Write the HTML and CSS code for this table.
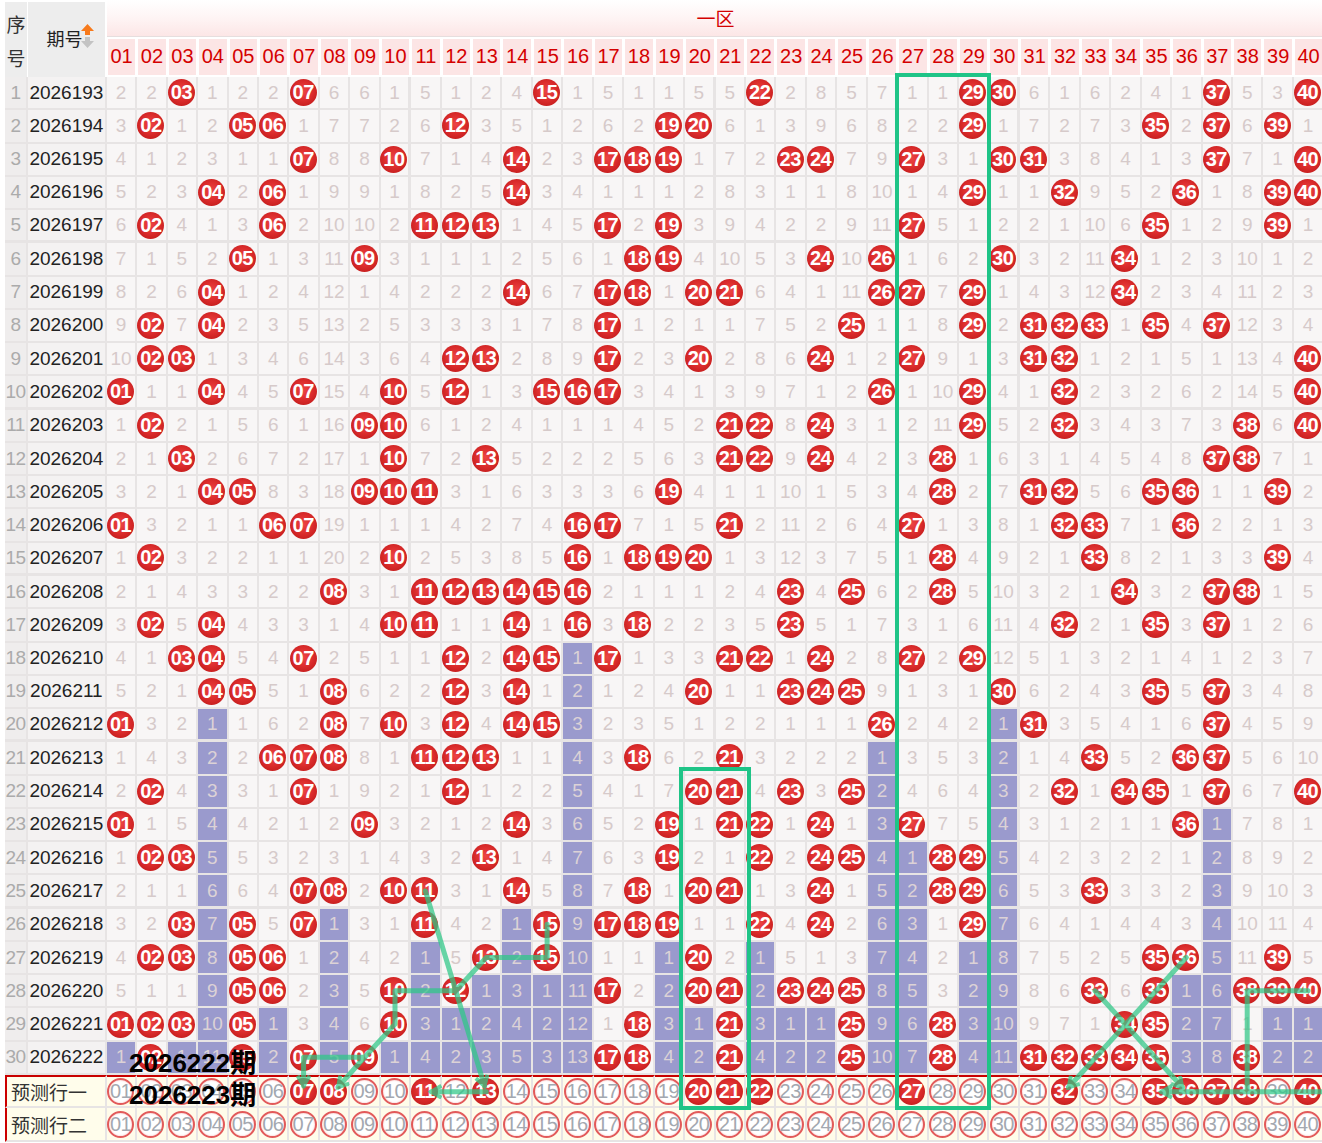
FILE: index.html
```html
<!DOCTYPE html>
<html lang="zh-CN">
<head>
<meta charset="utf-8">
<title>一区走势图</title>
<link rel="stylesheet" href="styles.css">
</head>
<body>
<div class="wrap" id="wrap">
  <div class="board" id="board">
    <div class="h-seq">序号</div>
    <div class="h-qh"><span class="h-qh-text">期号</span><svg class="sort" width="13" height="25" viewBox="0 0 13 25"><path d="M6.5 0 L13 7 L9 7 L9 11 L4 11 L4 7 L0 7 Z" fill="#f77a1c"/><path d="M4 13 L9 13 L9 17 L13 17 L6.5 24 L0 17 L4 17 Z" fill="#c3c3c3"/></svg></div>
    <div class="h-zone">一区</div>
  </div>
  <svg class="overlay" id="overlay" width="1322" height="1143" viewBox="0 0 1322 1143">
    <defs>
      <marker id="ah" markerUnits="userSpaceOnUse" markerWidth="16" markerHeight="16" refX="11" refY="7" orient="auto">
        <path d="M1,1 L11,7 L1,13" fill="none" stroke="#2ec887" stroke-width="4" stroke-linejoin="miter"/>
      </marker>
    </defs>
    <g id="lines" class="lines"></g>
    <rect class="frame" x="897" y="75" width="92" height="1033"/>
    <rect class="frame" x="681" y="769" width="68" height="339"/>
  </svg>
  <div class="tag tag1">2026222期</div>
  <div class="tag tag2">2026223期</div>
</div>
<script src="script.js"></script>
</body>
</html>
```

FILE: styles.css
```css
html, body {
  margin: 0;
  padding: 0;
  background: #ffffff;
}

.wrap {
  position: relative;
  width: 1322px;
  height: 1143px;
  overflow: hidden;
  padding-left: 5px;
  box-sizing: border-box;
  font-family: "Liberation Sans", Arial, "Noto Sans CJK SC", sans-serif;
}

.board {
  display: grid;
  grid-template-columns: 23px 78.8px repeat(40, 30.44px);
  grid-template-rows: 36.5px 40.5px repeat(30, 33.28px) 33.5px 33.5px;
}

.h-seq {
  grid-row: 1 / 3;
  box-sizing: border-box;
  background: #ededed;
  border-right: 1px solid #ffffff;
  border-top: 2px solid #ffffff;
  color: #333333;
  font-family: "Noto Sans CJK SC", sans-serif;
  font-size: 19px;
  line-height: 34px;
  padding-top: 5px;
  text-align: center;
  word-break: break-all;
}

.h-qh {
  grid-row: 1 / 3;
  box-sizing: border-box;
  background: #ededed;
  border-right: 2px solid #ffffff;
  border-top: 2px solid #ffffff;
  display: flex;
  align-items: center;
  justify-content: center;
  padding-left: 8px;
  padding-bottom: 4px;
}

.h-qh-text {
  color: #222222;
  font-family: "Noto Sans CJK SC", sans-serif;
  font-size: 18px;
}

.sort {
  display: block;
  margin-left: -1px;
  margin-top: -2px;
}

.h-zone {
  grid-column: 3 / span 40;
  box-sizing: border-box;
  background: linear-gradient(to bottom, #ffffff 0%, #fef3f3 55%, #fce6e6 100%);
  border-bottom: 1px solid #e6dede;
  color: #d40000;
  font-family: "Noto Sans CJK SC", sans-serif;
  font-size: 19px;
  display: flex;
  align-items: center;
  justify-content: center;
  padding-bottom: 1px;
}

.h-num {
  box-sizing: border-box;
  background: #fce5e5;
  border-left: 1px solid #ffffff;
  border-right: 2px solid #ffffff;
  border-top: 2px solid #ffffff;
  border-bottom: 2px solid #ffffff;
  color: #d40000;
  font-size: 20px;
  display: flex;
  align-items: center;
  justify-content: center;
}

.seq,
.qh,
.c,
.plabel,
.pc {
  box-sizing: border-box;
  border-right: 2px solid #e7e4e4;
  border-bottom: 2px solid #e7e4e4;
  display: flex;
  align-items: center;
  justify-content: center;
  overflow: visible;
  white-space: nowrap;
}

.seq {
  background: #efeded;
  color: #ababab;
  font-size: 19px;
  letter-spacing: -0.5px;
}

.qh {
  background: #f4f2f2;
  color: #222222;
  font-size: 19px;
}

.c {
  background: #f8f6f6;
  color: #d6caca;
  font-size: 19px;
}

.c.s10 {
  border-right-width: 3px;
}

.r5 {
  border-bottom-width: 3px;
}

.c.p {
  background: #9a9acd;
  color: #dcd2d6;
}

.ball {
  flex: none;
  width: 27px;
  height: 27px;
  border-radius: 50%;
  background: radial-gradient(circle at 50% 45%, #ec4545 0%, #dc2d2d 45%, #c81f1f 75%, #b51a1a 90%, rgba(181, 26, 26, 0.55) 100%);
  color: #ffffff;
  font-weight: bold;
  font-size: 20px;
  letter-spacing: -0.5px;
  display: flex;
  align-items: center;
  justify-content: center;
  margin-left: -1px;
}

.oball {
  flex: none;
  box-sizing: border-box;
  width: 27px;
  height: 27px;
  border-radius: 50%;
  border: 2px solid #e25a5a;
  box-shadow: inset 0 0 2px #f2b1b1;
  background: #ffffff;
  color: #a3a8b0;
  font-size: 20px;
  letter-spacing: -0.6px;
  display: flex;
  align-items: center;
  justify-content: center;
  margin-left: -1px;
}

.plabel {
  grid-column: span 2;
  background: #fffdeb;
  border-left: 2px solid #cc0000;
  justify-content: flex-start;
  padding-left: 4px;
  color: #333333;
  font-family: "Noto Sans CJK SC", sans-serif;
  font-size: 19px;
}

.pc {
  background: #fffcea;
}

.top-red {
  border-top: 2px solid #c80000;
}

.overlay {
  position: absolute;
  left: 0;
  top: 0;
  pointer-events: none;
}

.lines {
  opacity: 0.72;
}

.lines polyline {
  fill: none;
  stroke: #2ec887;
  stroke-width: 5;
  stroke-linejoin: round;
  stroke-linecap: round;
}

.frame {
  fill: none;
  stroke: #1fc487;
  stroke-width: 4;
}

.tag {
  position: absolute;
  left: 129px;
  height: 26px;
  color: #000000;
  font-family: "Liberation Sans", Arial, "Noto Sans CJK SC", sans-serif;
  font-weight: bold;
  font-size: 26px;
  line-height: 26px;
  white-space: nowrap;
}

.tag1 {
  top: 1050px;
}

.tag2 {
  top: 1082px;
}
```

FILE: script.js
```js
(function () {
  var HITS = [
    [3,7,15,22,29,30,37,40],
    [2,5,6,12,19,20,29,35,37,39],
    [7,10,14,17,18,19,23,24,27,30,31,37,40],
    [4,6,14,29,32,36,39,40],
    [2,6,11,12,13,17,19,27,35,39],
    [5,9,18,19,24,26,30,34],
    [4,14,17,18,20,21,26,27,29,34],
    [2,4,17,25,29,31,32,33,35,37],
    [2,3,12,13,17,20,24,27,31,32,40],
    [1,4,7,10,12,15,16,17,26,29,32,40],
    [2,9,10,21,22,24,29,32,38,40],
    [3,10,13,21,22,24,28,37,38],
    [4,5,9,10,11,19,28,31,32,35,36,39],
    [1,6,7,16,17,21,27,32,33,36],
    [2,10,16,18,19,20,28,33,39],
    [8,11,12,13,14,15,16,23,25,28,34,37,38],
    [2,4,10,11,14,16,18,23,32,35,37],
    [3,4,7,12,14,15,17,21,22,24,27,29],
    [4,5,8,12,14,20,23,24,25,30,35,37],
    [1,8,10,12,14,15,26,31,37],
    [6,7,8,11,12,13,18,21,33,36,37],
    [2,7,12,20,21,23,25,32,34,35,37,40],
    [1,9,14,19,21,22,24,27,36],
    [2,3,13,19,22,24,25,28,29],
    [7,8,10,11,14,18,20,21,24,28,29,33],
    [3,5,7,11,15,17,18,19,22,24,29],
    [2,3,5,6,13,15,20,35,36,39],
    [5,6,10,12,17,20,21,23,24,25,33,35,38,39,40],
    [1,2,3,5,10,18,21,25,28,34,35],
    [2,5,7,9,17,18,21,25,28,31,32,33,34,35,38]
  ];
  var ROW1 = [2,2,0,1,2,2,0,6,6,1,5,1,2,4,0,1,5,1,1,5,5,0,2,8,5,7,1,1,0,0,6,1,6,2,4,1,0,5,3,0];
  var PRED1 = [7,8,11,13,20,21,22,27,32,35,36,37,38,40];

  var board = document.getElementById('board');
  var wrap = document.getElementById('wrap');
  function pad(n) { return (n < 10 ? '0' : '') + n; }
  function el(cls, text) {
    var d = document.createElement('div');
    d.className = cls;
    if (text !== undefined) d.textContent = text;
    return d;
  }

  var c, r;
  for (c = 1; c <= 40; c++) board.appendChild(el('h-num', pad(c)));

  var last = [];
  for (c = 0; c <= 40; c++) last[c] = 0;
  HITS.forEach(function (h, i) { h.forEach(function (n) { last[n] = i + 1; }); });

  var miss = ROW1.map(function (v) { return v - 1; });
  var cells = [];
  for (r = 1; r <= 30; r++) {
    var rowCls = (r % 5 === 0 && r < 30) ? ' r5' : '';
    board.appendChild(el('seq' + rowCls, String(r)));
    board.appendChild(el('qh' + rowCls, String(2026192 + r)));
    cells[r] = [];
    var hs = HITS[r - 1];
    for (c = 1; c <= 40; c++) {
      var cls = 'c' + rowCls + (c % 10 === 0 && c < 40 ? ' s10' : '') + (r > last[c] ? ' p' : '');
      var d = el(cls);
      if (hs.indexOf(c) >= 0) {
        miss[c - 1] = 0;
        d.appendChild(el('ball', pad(c)));
      } else {
        miss[c - 1] += 1;
        d.textContent = String(miss[c - 1]);
      }
      board.appendChild(d);
      cells[r][c] = d;
    }
  }

  var labels = ['预测行一', '预测行二'];
  for (var p = 0; p < 2; p++) {
    r = 31 + p;
    var topCls = p === 0 ? ' top-red' : '';
    board.appendChild(el('plabel' + topCls, labels[p]));
    cells[r] = [];
    for (c = 1; c <= 40; c++) {
      var pd = el('pc' + topCls + (c % 10 === 0 && c < 40 ? ' s10' : ''));
      var isRed = p === 0 && PRED1.indexOf(c) >= 0;
      pd.appendChild(el(isRed ? 'ball' : 'oball', pad(c)));
      board.appendChild(pd);
      cells[r][c] = pd;
    }
  }

  var wr = wrap.getBoundingClientRect();
  function ctr(col, row) {
    var extra = 0;
    if (col > 40) { extra = (col - 40) * 30; col = 40; }
    var e = cells[row][col];
    var b = e.getBoundingClientRect();
    var bt = row === 31 ? 2 : 0;
    return [b.left - wr.left + (b.width - 2) / 2 + extra, b.top - wr.top + bt + (b.height - 2 - bt) / 2];
  }

  var PATHS = [
    { pts: [[11,25],[12,28],[13,31]], arrow: true },
    { pts: [[13,31],[11,31]], arrow: true },
    { pts: [[15,26],[15,27],[13,27],[12,28],[10,28],[10,29],[9,30],[8,31]], arrow: true },
    { pts: [[9,30],[7,30],[7,31]], arrow: true },
    { pts: [[36,27],[32,31]], arrow: true },
    { pts: [[33,28],[36,31]], arrow: true },
    { pts: [[40,28],[38,28],[38,31]], arrow: false },
    { pts: [[40.6,31],[35,31]], arrow: true }
  ];

  var g = document.getElementById('lines');
  var NS = 'http://www.w3.org/2000/svg';
  PATHS.forEach(function (path) {
    var pts = path.pts.map(function (q) { return ctr(q[0], q[1]); });
    if (path.arrow) {
      var a = pts[pts.length - 2], z = pts[pts.length - 1];
      var dx = z[0] - a[0], dy = z[1] - a[1];
      var len = Math.sqrt(dx * dx + dy * dy);
      var cut = 6;
      pts[pts.length - 1] = [z[0] - dx / len * cut, z[1] - dy / len * cut];
    }
    var pl = document.createElementNS(NS, 'polyline');
    pl.setAttribute('points', pts.map(function (q) { return q[0].toFixed(1) + ',' + q[1].toFixed(1); }).join(' '));
    if (path.arrow) pl.setAttribute('marker-end', 'url(#ah)');
    g.appendChild(pl);
  });
})();
```
